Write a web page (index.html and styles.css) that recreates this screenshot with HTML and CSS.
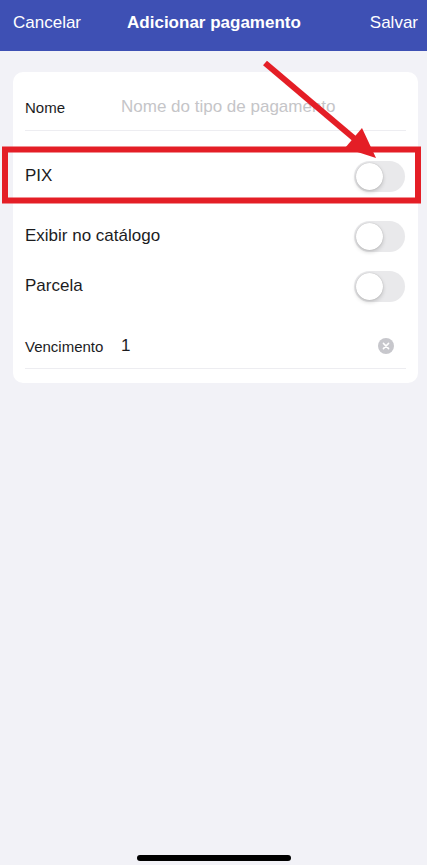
FILE: index.html
```html
<!DOCTYPE html>
<html lang="pt-BR">
<head>
    <meta charset="UTF-8">
    <meta name="viewport" content="width=device-width, initial-scale=1.0">
    <title>Adicionar pagamento</title>
    <link rel="stylesheet" href="styles.css">
</head>
<body>

    <div class="screen">
        <div class="navbar">
            <span class="nav-btn">Cancelar</span>
            <span class="nav-title">Adicionar pagamento</span>
            <span class="nav-btn nav-save">Salvar</span>
        </div>

        <div class="card">
            <div class="field field-nome">
                <span class="field-label">Nome</span>
                <span class="field-input placeholder">Nome do tipo de pagamento</span>
            </div>

            <div class="switch-row row-pix">
                <span class="switch-label">PIX</span>
                <span class="toggle"><span class="knob"></span></span>
            </div>

            <div class="switch-row row-catalogo">
                <span class="switch-label">Exibir no catálogo</span>
                <span class="toggle"><span class="knob"></span></span>
            </div>

            <div class="switch-row">
                <span class="switch-label">Parcela</span>
                <span class="toggle"><span class="knob"></span></span>
            </div>

            <div class="field field-venc">
                <span class="field-label">Vencimento</span>
                <span class="field-input">1</span>
                <span class="clear-btn">
                    <svg width="16" height="16" viewBox="0 0 16 16">
                        <circle cx="8" cy="8" r="8" fill="#c7c7cc"/>
                        <path d="M5.4 5.4 L10.6 10.6 M10.6 5.4 L5.4 10.6" stroke="#fff" stroke-width="1.5" stroke-linecap="round"/>
                    </svg>
                </span>
            </div>
        </div>

        <div class="home-bar"></div>

        <!-- annotation drawn over the screenshot -->
        <svg class="annotation" width="427" height="865" viewBox="0 0 427 865">
            <rect x="5" y="149.5" width="413" height="51" fill="none" stroke="#e41e26" stroke-width="6"/>
            <line x1="265" y1="63" x2="356" y2="140" stroke="#e41e26" stroke-width="6"/>
            <polygon points="376,158 345,148 362,128" fill="#e41e26"/>
        </svg>
    </div>

</body>
</html>
```

FILE: styles.css
```css
* {
    box-sizing: border-box;
}
body {
    margin: 0;
    font-family: "Liberation Sans", Arial, sans-serif;
    background-color: #f2f2f7;
    color: #1c1c1e;
}
.screen {
    position: relative;
    width: 427px;
    min-height: 865px;
    display: flex;
    flex-direction: column;
}
.navbar {
    height: 51px;
    background-color: #3e50b4;
    color: #fff;
    display: flex;
    align-items: center;
    padding: 0 9px 6px 13px;
    font-size: 17px;
}
.nav-title {
    font-weight: bold;
    margin-left: 46px;
}
.nav-save {
    margin-left: auto;
}
.card {
    margin: 21px 9px 0 13px;
    background-color: #fff;
    border-radius: 10px;
    padding: 12px 12px 14px 12px;
}
.field {
    display: flex;
    align-items: center;
    border-bottom: 1px solid #ededf1;
}
.field-nome {
    height: 47px;
}
.field-venc {
    height: 45px;
    margin-top: 13px;
}
.field-label {
    width: 96px;
    font-size: 15px;
}
.field-input {
    flex: 1;
    font-size: 17px;
}
.placeholder {
    color: #c5c5c8;
}
.clear-btn {
    display: flex;
    margin-right: 12px;
}
.switch-row {
    height: 50px;
    display: flex;
    align-items: center;
    justify-content: space-between;
    font-size: 17px;
}
.row-pix {
    margin-top: 20px;
}
.row-catalogo {
    margin-top: 10px;
}
.toggle {
    width: 51px;
    height: 31px;
    border-radius: 16px;
    background-color: #e9e9eb;
    padding: 2px;
    margin-right: 1px;
}
.knob {
    display: block;
    width: 27px;
    height: 27px;
    border-radius: 50%;
    background-color: #fff;
    box-shadow: 0 2px 4px rgba(0, 0, 0, 0.18), 0 0 1px rgba(0, 0, 0, 0.25);
}
.home-bar {
    margin: auto auto 4px auto;
    width: 154px;
    height: 6px;
    border-radius: 3px;
    background-color: #000;
}
.annotation {
    position: absolute;
    left: 0;
    top: 0;
    pointer-events: none;
}
```
